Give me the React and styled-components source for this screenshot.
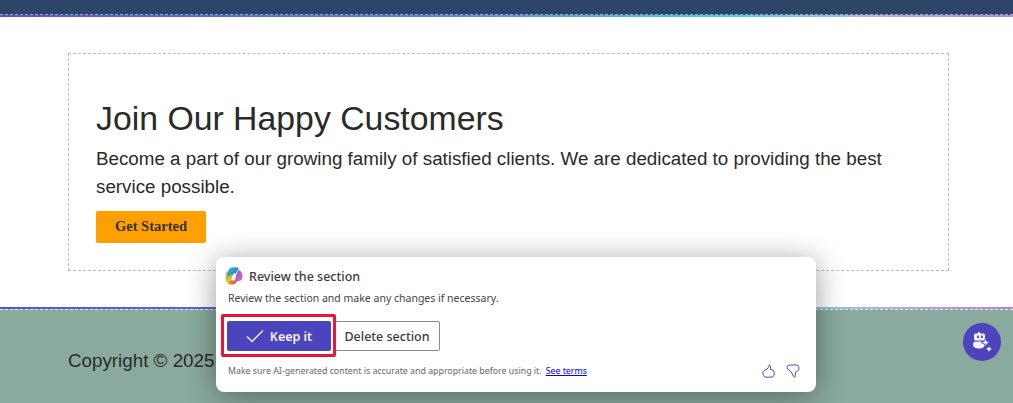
import React from 'react';
import styled, { createGlobalStyle } from 'styled-components';

const Global = createGlobalStyle`
html, body {
  margin: 0;
  padding: 0;
  background: #fff;
}
body {
  font-family: 'Liberation Sans', Arial, sans-serif;
  color: #222;
  overflow: hidden;
}
`

const Page = styled.div`
position: relative;
width: 1013px;
height: 403px;
overflow: hidden;
display: flex;
flex-direction: column;
`

const TopBar = styled.div`
height: 14px;
background-color: #2c4569;
border-bottom: 1px dashed #a9a9a9;
`

const Rainbow = styled.div`
height: 2px;
background: linear-gradient(90deg, #4f55e0 0%, #5b7be8 40%, #3fd4f0 72%, #a8b8f0 85%, #b97fe6 100%);
`

const Main = styled.main`
height: 290px;
padding: 36px 64px 0 68px;
box-sizing: border-box;
`

const Card = styled.section`
height: 218px;
box-sizing: border-box;
border: 1px dashed #bdbdbd;
padding: 45px 27px 0;
`

const Title = styled.h2`
margin: 0;
font-size: 33.8px;
line-height: 39px;
font-weight: 400;
color: #2a2a2a;
`

const Lead = styled.p`
margin: 7px 0 10px;
font-size: 18.8px;
line-height: 28px;
color: #2a2a2a;
`

const Cta = styled.button`
display: block;
width: 110px;
height: 32px;
padding: 0 0 2px;
border: 0;
border-radius: 2px;
background-color: #ff9f00;
color: #333;
font-family: 'Liberation Serif', serif;
font-weight: 700;
font-size: 14.5px;
`

const Footer = styled.footer`
flex: 1;
background-color: #8aaa9e;
border-top: 1px dashed #e8e8e8;
padding: 40px 68px 0;
font-size: 18.8px;
line-height: 22px;
color: #2a2a2a;
`

const Popup = styled.div`
position: absolute;
left: 216px;
top: 257px;
width: 600px;
height: 135px;
box-sizing: border-box;
padding: 9px 12px 0 9px;
background: #fff;
border-radius: 8px;
box-shadow: 0 4px 30px rgba(0, 0, 0, 0.4);
font-family: 'Noto Sans', 'Open Sans', sans-serif;
`

const PopupHead = styled.div`
display: flex;
align-items: center;
gap: 6px;
height: 20px;
font-size: 12.5px;
font-weight: 500;
color: #3c3c3c;
`

const PopupText = styled.p`
margin: 5px 0 0 3px;
font-size: 10.5px;
line-height: 15px;
color: #444;
`

const Actions = styled.div`
display: flex;
align-items: center;
margin: 15px 0 0 2px;
`

const Highlight = styled.div`
border: 3px solid #e8173a;
padding: 4px 2px 3px 3px;
margin: -7px -1px -6px -6px;
border-radius: 2px;
position: relative;
z-index: 1;
background: #fff;
`

const KeepBtn = styled.button`
display: flex;
align-items: center;
justify-content: center;
gap: 6px;
width: 104px;
height: 30px;
padding: 0;
border: 0;
border-radius: 2px;
background-color: #4c44bd;
color: #f4f3fc;
font-family: inherit;
font-size: 12.5px;
font-weight: 600;
`

const DeleteBtn = styled.button`
height: 30px;
width: 105px;
padding: 0;
background: #fff;
border: 1px solid #8a8a8a;
border-left: 0;
border-radius: 0 2px 2px 0;
color: #3c3c3c;
font-family: inherit;
font-size: 12.5px;
font-weight: 500;
`

const Fine = styled.div`
display: flex;
align-items: center;
justify-content: space-between;
margin: 13px 0 0 3px;
font-size: 8.8px;
color: #666;
`

const Terms = styled.a`
color: #0000ee;
text-decoration: underline;
margin-left: 4px;
`

const Feedback = styled.div`
display: flex;
gap: 10px;
margin-right: 4px;
`

const Fab = styled.div`
position: absolute;
left: 963px;
top: 323px;
width: 38px;
height: 38px;
border-radius: 50%;
background-color: #4c44bd;
display: grid;
place-items: center;
`

const CopilotLogo = () => (
  <svg width="18" height="18" viewBox="0 0 18 18">
    <defs>
      <linearGradient id="cpA" x1="0" y1="0" x2="1" y2="1">
        <stop offset="0" stopColor="#2fc4d8" />
        <stop offset="1" stopColor="#2a62d8" />
      </linearGradient>
      <linearGradient id="cpB" x1="0" y1="0" x2="1" y2="1">
        <stop offset="0" stopColor="#7a5cf0" />
        <stop offset="1" stopColor="#ee5fb8" />
      </linearGradient>
      <linearGradient id="cpC" x1="0" y1="0" x2="0" y2="1">
        <stop offset="0" stopColor="#5cc060" />
        <stop offset="1" stopColor="#f7c51c" />
      </linearGradient>
      <linearGradient id="cpD" x1="0" y1="0" x2="1" y2="0">
        <stop offset="0" stopColor="#f59a23" />
        <stop offset="1" stopColor="#e83a5a" />
      </linearGradient>
    </defs>
    <path d="M0.500 10c0-4 1.500-6 3.500-6.500L6 1.500C7 .7 8 .5 9 .5h3c1 0 1.500.5 1.500 1.500L9 9 7.500 14l-3 3C2 16.500.5 14 .5 10z" fill="url(#cpC)" />
    <path d="M5 .9C6 .5 7 .5 8 .5h4c1 0 1.700.6 1.500 1.500L10 7.500H5.500L3 10C2.500 6 3 2.500 5 .9z" fill="url(#cpA)" />
    <path d="M13.500 3c2.500.5 4 3 4 6.500 0 3-1.500 4.500-4 4.500h-3.500l1-6z" fill="url(#cpB)" />
    <path d="M4.500 17.500c-1 0-1.200-.8-.8-1.500L6 13.500h6c-.5 2-2 4-4 4z" fill="url(#cpD)" />
    <path d="M8.500 6.500h3L9 13H6z" fill="#fff" />
  </svg>
)

const Check = () => (
  <svg width="18" height="14" viewBox="0 0 18 14" fill="none" stroke="#f4f3fc" strokeWidth="1.3">
    <path d="M1 7.500l5 5L17 1.500" />
  </svg>
)

const ThumbUp = () => (
  <svg width="14" height="14" viewBox="0 0 14 14" fill="none" stroke="#4c44bd" strokeWidth="1">
    <path d="M7.600 1c-.9 0-.7 1.400-1.400 2.600C5.600 4.700 4.800 5.400 4 5.700 2.800 6 1 7 .9 8.800c-.1 1.800.8 3.900 2.500 4.200 2 .3 5.500.3 7.500-.2 1.600-.6 1.500-5.300.6-6.500-.7-.7-2.300-.5-3-.7.2-1.600.4-4.600-1-4.600z" />
  </svg>
)

const ThumbDown = () => (
  <svg width="14" height="14" viewBox="0 0 14 14" fill="none" stroke="#4c44bd" strokeWidth="1">
    <path d="M1 2.600c.2-1 1.800-1.500 3-1.500 2.500-.1 6-.3 8 .3 1.300.8 1 4 .6 5-.6 1-2 .8-2.700 1.300-.8.8-.3 3.700-.8 5-.5.700-1.200.3-1.700-.4C6.600 10.500 5.800 8 4 6.800 2.500 6 .8 4.200 1 2.600z" />
  </svg>
)

const BotSpark = () => (
  <svg width="22" height="22" viewBox="0 0 22 22" fill="#f4f3fc">
    <rect x="7" y="1" width="2" height="2" />
    <path fillRule="evenodd" d="M4.500 2.500h8a1.500 1.500 0 0 1 1.500 1.500v4a1.500 1.500 0 0 1-1.500 1.500h-8A1.500 1.500 0 0 1 3 8V4a1.500 1.500 0 0 1 1.500-1.500zM6 4.500v2.500h1.800V4.500zM10 4.500v2.500h1.800V4.500z" />
    <path d="M4.500 10.500h6c1 2 2.500 2.500 3 3.500.5 2-2 3.500-5 3.500-3.500 0-6.500-1-6.500-4 0-2 1-3 2.500-3z" />
    <path d="M14.500 7l1.200 3.300 3.300 1.200-3.300 1.200-1.200 3.300-1.200-3.300-3.300-1.200 3.300-1.200z" stroke="#4c44bd" strokeWidth=".7" />
    <path d="M18 15l.9 2.100 2.100.9-2.100.9-.9 2.100-.9-2.100-2.100-.9 2.100-.9z" />
  </svg>
)

const App = () => {
  return (
    <Page>
      <Global />
      <TopBar />
      <Rainbow />
      <Main>
        <Card>
          <Title>Join Our Happy Customers</Title>
          <Lead>Become a part of our growing family of satisfied clients. We are dedicated to providing the best service possible.</Lead>
          <Cta>Get Started</Cta>
        </Card>
      </Main>
      <Rainbow />
      <Footer>Copyright © 2025</Footer>
      <Popup>
        <PopupHead>
          <CopilotLogo />
          Review the section
        </PopupHead>
        <PopupText>Review the section and make any changes if necessary.</PopupText>
        <Actions>
          <Highlight>
            <KeepBtn><Check />Keep it</KeepBtn>
          </Highlight>
          <DeleteBtn>Delete section</DeleteBtn>
        </Actions>
        <Fine>
          <span>Make sure AI-generated content is accurate and appropriate before using it.<Terms href="#">See terms</Terms></span>
          <Feedback>
            <ThumbUp />
            <ThumbDown />
          </Feedback>
        </Fine>
      </Popup>
      <Fab><BotSpark /></Fab>
    </Page>
  )
}

export default App;
